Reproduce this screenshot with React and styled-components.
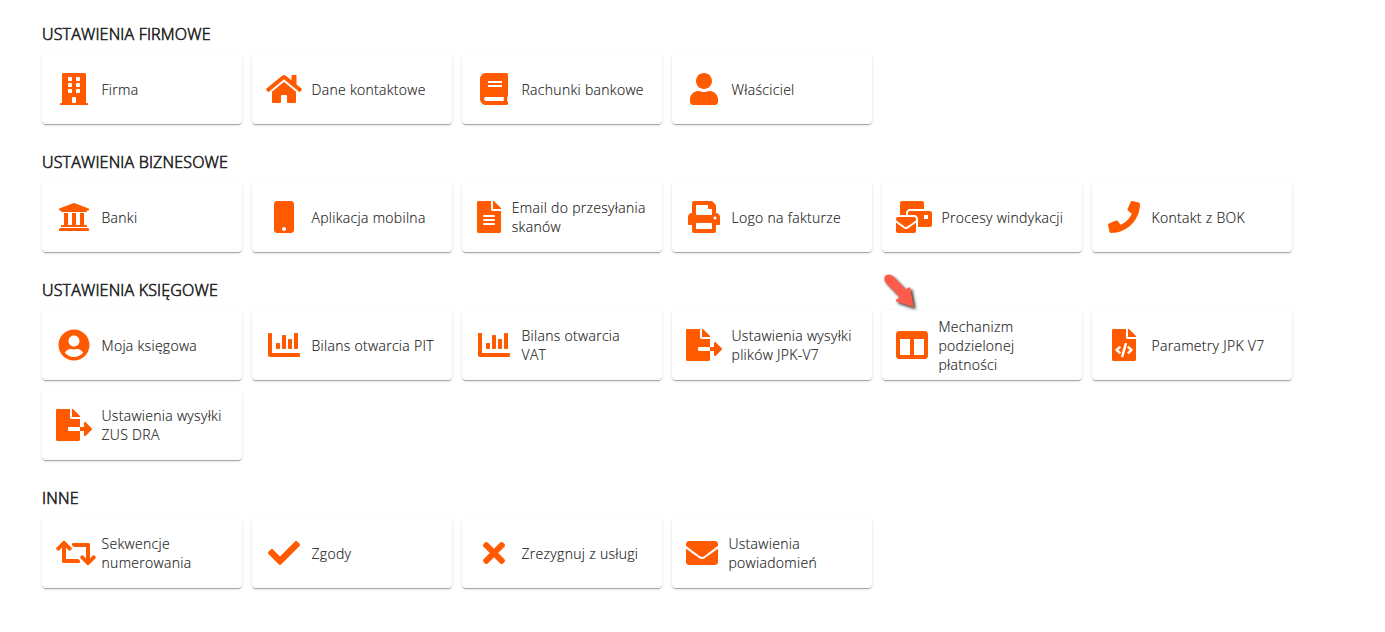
import React from 'react';
import styled, { createGlobalStyle } from 'styled-components';
import {
    FaBuilding, FaHome, FaBook, FaUser, FaUniversity, FaMobile, FaFileAlt, FaPrint, FaMailBulk, FaPhone,
    FaUserCircle, FaChartBar, FaFileExport, FaColumns, FaFileCode, FaRetweet, FaCheck, FaTimes, FaEnvelope
} from 'react-icons/fa';

const GlobalStyle = createGlobalStyle`
    body {
        margin: 0;
        background: #fff;
        font-family: "Open Sans", sans-serif;
    }
`

const Page = styled.div`
    padding: 23px 42px 0;
`

const Section = styled.section`
    margin-bottom: 27px;
`

const SectionTitle = styled.h2`
    margin: 0 0 9px;
    font-size: 16px;
    font-weight: 300;
    line-height: 22px;
    color: #212121;
    -webkit-text-stroke: 0.6px #212121;
    letter-spacing: 0.18px;
`

const Tiles = styled.div`
    display: flex;
    flex-wrap: wrap;
    gap: 10px;
`

const Tile = styled.div`
    position: relative;
    box-sizing: border-box;
    display: flex;
    align-items: center;
    width: 200px;
    height: 70px;
    padding: 0 0 0 14px;
    border-radius: 4px;
    background: #fff;
    box-shadow: 0 2px 1px -1px rgba(0, 0, 0, 0.2), 0 1px 1px 0 rgba(0, 0, 0, 0.14), 0 1px 3px 0 rgba(0, 0, 0, 0.12);
    cursor: pointer;
`

const TileIcon = styled.div`
    flex: none;
    display: flex;
    justify-content: ${({$wide}) => $wide ? "flex-start" : "center"};
    width: ${({$width}) => $width}px;
    margin-right: ${({$gap}) => $gap}px;
    color: #ff5a00;

    svg {
        flex: none;
        display: block;
        width: ${({$glyph}) => $glyph}px;
        height: 32px;
    }
`

const TileText = styled.div`
    font-size: 14px;
    font-weight: 300;
    line-height: 19px;
    letter-spacing: 0.3px;
    color: #212121;
    -webkit-text-stroke: 0.15px #212121;
    white-space: pre;
`

const Pointer = styled.svg`
    position: absolute;
    left: -2px;
    top: -40px;
    width: 40px;
    height: 44px;
    filter: drop-shadow(2px 2px 1.5px rgba(0, 0, 0, 0.8));
`

const sections = [
    {
        title: "USTAWIENIA FIRMOWE",
        items: [
            {icon: FaBuilding, text: "Firma"},
            {icon: FaHome, text: "Dane kontaktowe", glyph: 36},
            {icon: FaBook, text: "Rachunki bankowe"},
            {icon: FaUser, text: "Właściciel"},
        ]
    },
    {
        title: "USTAWIENIA BIZNESOWE",
        items: [
            {icon: FaUniversity, text: "Banki"},
            {icon: FaMobile, text: "Aplikacja mobilna"},
            {icon: FaFileAlt, text: "Email do przesyłania\nskanów", width: 26, gap: 9.8},
            {icon: FaPrint, text: "Logo na fakturze"},
            {icon: FaMailBulk, text: "Procesy windykacji", glyph: 36},
            {icon: FaPhone, text: "Kontakt z BOK"},
        ]
    },
    {
        title: "USTAWIENIA KSIĘGOWE",
        items: [
            {icon: FaUserCircle, text: "Moja księgowa"},
            {icon: FaChartBar, text: "Bilans otwarcia PIT"},
            {icon: FaChartBar, text: "Bilans otwarcia\nVAT"},
            {icon: FaFileExport, text: "Ustawienia wysyłki\nplików JPK-V7", glyph: 36},
            {icon: FaColumns, text: "Mechanizm\npodzielonej\npłatności", width: 32, gap: 10.4, pointer: true},
            {icon: FaFileCode, text: "Parametry JPK V7"},
            {icon: FaFileExport, text: "Ustawienia wysyłki\nZUS DRA", glyph: 36},
        ]
    },
    {
        title: "INNE",
        items: [
            {icon: FaRetweet, text: "Sekwencje\nnumerowania", glyph: 40, wide: true},
            {icon: FaCheck, text: "Zgody"},
            {icon: FaTimes, text: "Zrezygnuj z usługi"},
            {icon: FaEnvelope, text: "Ustawienia\npowiadomień", width: 32, gap: 10.4},
        ]
    },
]

const SettingTile = ({item}) => {
    const Icon = item.icon
    return (
        <Tile>
            <TileIcon $width={item.width || 36} $gap={item.gap || 9.5} $glyph={item.glyph || 32} $wide={item.wide}>
                <Icon/>
            </TileIcon>
            <TileText>{item.text}</TileText>
            {item.pointer && (
                <Pointer viewBox="0 0 40 44">
                    <path
                        d="M4.3 7.8C5.4 3.8 10.4 3.4 13.2 6.6L25.8 19.4L28.2 17.4Q29.8 16.6 30.4 18.4L33.8 37.2L16.4 31.6Q14.8 30.6 16.4 29.4L19.6 27L5.8 12.8Q3.8 10.4 4.3 7.8Z"
                        fill="#ff5b4c"
                    />
                </Pointer>
            )}
        </Tile>
    )
}

const App = () => {
    return (
        <>
            <GlobalStyle/>
            <Page>
                {sections.map((section) => (
                    <Section key={section.title}>
                        <SectionTitle>{section.title}</SectionTitle>
                        <Tiles>
                            {section.items.map((item) => (
                                <SettingTile key={item.text} item={item}/>
                            ))}
                        </Tiles>
                    </Section>
                ))}
            </Page>
        </>
    )
}

export default App;
